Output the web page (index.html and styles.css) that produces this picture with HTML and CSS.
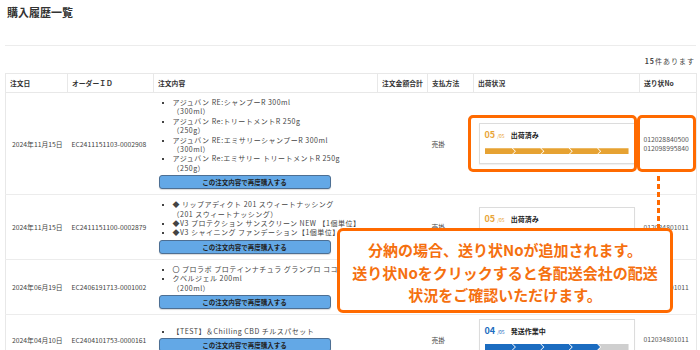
FILE: index.html
```html
<!DOCTYPE html>
<html lang="ja">
<head>
    <meta charset="UTF-8">
    <meta name="viewport" content="width=device-width, initial-scale=1.0">
    <title>購入履歴一覧</title>
    <link rel="stylesheet" href="styles.css">
</head>
<body>
    <div class="page">
        <h1 class="title">購入履歴一覧</h1>
        <hr class="rule">
        <p class="count"><b>15</b>件あります</p>

        <table class="orders">
            <colgroup>
                <col class="c-date">
                <col class="c-id">
                <col class="c-items">
                <col class="c-total">
                <col class="c-pay">
                <col class="c-status">
                <col class="c-track">
            </colgroup>
            <thead>
                <tr>
                    <th>注文日</th>
                    <th>オーダーＩＤ</th>
                    <th>注文内容</th>
                    <th>注文金額合計</th>
                    <th>支払方法</th>
                    <th>出荷状況</th>
                    <th>送り状No</th>
                </tr>
            </thead>
            <tbody>
                <tr>
                    <td class="date">2024年11月15日</td>
                    <td>EC2411151103-0002908</td>
                    <td class="items">
                        <ul>
                            <li>アジュバン RE:シャンプーR 300ml<span class="sub">（300ml）</span></li>
                            <li>アジュバン Re:トリートメントR 250g<span class="sub">（250g）</span></li>
                            <li>アジュバン RE:エミサリーシャンプーR 300ml<span class="sub">（300ml）</span></li>
                            <li>アジュバン Re:エミサリー トリートメントR 250g<span class="sub">（250g）</span></li>
                        </ul>
                        <button class="rebuy">この注文内容で再度購入する</button>
                    </td>
                    <td></td>
                    <td>売掛</td>
                    <td class="status">
                        <div class="status-box">
                            <div class="status-head"><span class="num">05</span><span class="of">/05</span><span class="label">出荷済み</span></div>
                            <div class="steps">
                                <span class="step"></span><span class="step"></span><span class="step"></span><span class="step"></span><span class="step"></span>
                            </div>
                        </div>
                    </td>
                    <td class="track"><a>012028840500</a><a>012098995840</a></td>
                </tr>
                <tr>
                    <td class="date">2024年11月15日</td>
                    <td>EC2411151100-0002879</td>
                    <td class="items">
                        <ul>
                            <li>◆ リップアディクト 201 スウィートナッシング<span class="sub">（201 スウィートナッシング）</span></li>
                            <li>◆V3 プロテクション サンスクリーン NEW 【1個単位】</li>
                            <li>◆V3 シャイニング ファンデーション【1個単位】</li>
                        </ul>
                        <button class="rebuy">この注文内容で再度購入する</button>
                    </td>
                    <td></td>
                    <td>売掛</td>
                    <td class="status">
                        <div class="status-box">
                            <div class="status-head"><span class="num">05</span><span class="of">/05</span><span class="label">出荷済み</span></div>
                            <div class="steps">
                                <span class="step"></span><span class="step"></span><span class="step"></span><span class="step"></span><span class="step"></span>
                            </div>
                        </div>
                    </td>
                    <td class="track"><a>012034801011</a></td>
                </tr>
                <tr>
                    <td class="date">2024年06月19日</td>
                    <td>EC2406191713-0001002</td>
                    <td class="items">
                        <ul>
                            <li class="nowrap">〇 プロラボ プロテインナチュラ グランプロ ココア 200g</li>
                            <li>クベルジェル 200ml<span class="sub">（200ml）</span></li>
                        </ul>
                        <button class="rebuy">この注文内容で再度購入する</button>
                    </td>
                    <td></td>
                    <td>売掛</td>
                    <td class="status">
                        <div class="status-box">
                            <div class="status-head"><span class="num">05</span><span class="of">/05</span><span class="label">出荷済み</span></div>
                            <div class="steps">
                                <span class="step"></span><span class="step"></span><span class="step"></span><span class="step"></span><span class="step"></span>
                            </div>
                        </div>
                    </td>
                    <td class="track"><a>012034801011</a></td>
                </tr>
                <tr>
                    <td class="date">2024年04月10日</td>
                    <td>EC2404101753-0000161</td>
                    <td class="items">
                        <ul>
                            <li>【TEST】＆Chilling CBD チルスパセット</li>
                        </ul>
                        <button class="rebuy">この注文内容で再度購入する</button>
                    </td>
                    <td></td>
                    <td>売掛</td>
                    <td class="status">
                        <div class="status-box working">
                            <div class="status-head"><span class="num">04</span><span class="of">/05</span><span class="label">発送作業中</span></div>
                            <div class="steps">
                                <span class="step"></span><span class="step"></span><span class="step"></span><span class="step"></span><span class="step todo"></span>
                            </div>
                        </div>
                    </td>
                    <td class="track"><a>012034801011</a></td>
                </tr>
            </tbody>
        </table>

        <!-- annotation overlay -->
        <div class="mark mark-status"></div>
        <div class="mark mark-track"></div>
        <div class="connector"></div>
        <div class="callout">
            分納の場合、送り状Noが追加されます。<br>
            送り状Noをクリックすると各配送会社の配送<br>
            状況をご確認いただけます。
        </div>
    </div>
</body>
</html>
```

FILE: styles.css
```css
html, body {
    margin: 0;
    overflow: hidden;
    background: #fff;
}

body {
    font-family: "Noto Sans CJK JP", "Noto Sans", sans-serif;
    color: #333;
}

.page {
    position: relative;
    padding: 0 4px 0 5px;
}

.title {
    margin: 0;
    padding: 4px 0 0 2px;
    font-size: 11px;
    line-height: 16px;
    font-weight: bold;
    color: #333;
}

.rule {
    margin: 25px 0 0;
    border: 0;
    border-top: 1px solid #ececec;
}

.count {
    margin: 10px 1px 7px 0;
    font-size: 7px;
    line-height: 10px;
    letter-spacing: 1px;
    text-align: right;
    color: #444;
}

.orders {
    width: 691px;
    table-layout: fixed;
    border-collapse: collapse;
    border: 1px solid #e8e8e8;
    font-size: 6.8px;
    color: #444;
}

.c-date { width: 62px; }
.c-id { width: 86px; }
.c-items { width: 224px; }
.c-total { width: 50px; }
.c-pay { width: 46px; }
.c-status { width: 166px; }
.c-track { width: 57px; }

.orders th {
    height: 18px;
    padding: 0 4px;
    text-align: left;
    white-space: nowrap;
    overflow: hidden;
    font-weight: bold;
    color: #333;
    border-right: 1px solid #e8e8e8;
    border-bottom: 1px solid #e8e8e8;
}

.orders td {
    padding: 5px 4px;
    vertical-align: middle;
    border-bottom: 1px solid #ececec;
    white-space: nowrap;
}

.orders td.date {
    padding-left: 6px;
}

.orders td.items {
    padding: 5px;
    white-space: normal;
}

.items ul {
    margin: 0;
    padding-left: 14px;
    list-style: square;
    font-size: 7px;
    line-height: 9.4px;
    letter-spacing: 0.5px;
}

.items li::marker {
    font-size: 6px;
}

.items .sub {
    display: block;
}

.items .nowrap {
    white-space: nowrap;
}

.rebuy {
    display: block;
    width: 172px;
    height: 14px;
    margin-top: 2px;
    padding: 0;
    font-family: inherit;
    font-size: 6.5px;
    font-weight: bold;
    color: #222;
    background: #63a8e6;
    border: 1px solid #4d6f93;
    border-radius: 3px;
    box-shadow: 0 1px 1px rgba(0, 0, 0, 0.15);
}

.orders td.status {
    padding: 4px 5px;
}

.status-box {
    padding: 5px 5px 9px;
    border: 1px solid #dcdcdc;
    box-shadow: 0 1px 1px rgba(0, 0, 0, 0.06);
    background: #fff;
}

.status-head {
    height: 12px;
    margin-bottom: 7px;
    display: flex;
    align-items: baseline;
    line-height: 12px;
}

.status-head .num {
    font-size: 9px;
    font-weight: bold;
    color: #e9a63a;
}

.status-head .of {
    margin-left: 2px;
    font-size: 5px;
    color: #e9a63a;
}

.status-head .label {
    margin-left: 6px;
    font-size: 7px;
    font-weight: bold;
    color: #222;
}

.working .num,
.working .of {
    color: #1b6cc0;
}

.steps {
    display: flex;
    height: 6px;
}

.step {
    flex: 1;
    margin-left: -2px;
    background: #e6a232;
    clip-path: polygon(0 0, calc(100% - 3px) 0, 100% 50%, calc(100% - 3px) 100%, 0 100%, 3px 50%);
}

.step:first-child {
    margin-left: 0;
    clip-path: polygon(0 0, calc(100% - 3px) 0, 100% 50%, calc(100% - 3px) 100%, 0 100%);
}

.step:last-child {
    clip-path: polygon(0 0, 100% 0, 100% 100%, 0 100%, 3px 50%);
}

.working .step {
    background: #1b6cc0;
}

.working .step.todo {
    background: #cfcfcf;
}

.track a {
    display: block;
    font-size: 6.8px;
    line-height: 8.5px;
    color: #555;
}

/* annotation overlay */
.mark {
    position: absolute;
    top: 115px;
    height: 57px;
    box-sizing: border-box;
    border: 3px solid #ff6a00;
    border-radius: 5px;
}

.mark-status {
    left: 468px;
    width: 169px;
}

.mark-track {
    left: 637px;
    width: 59px;
}

.connector {
    position: absolute;
    left: 657px;
    top: 176px;
    width: 3px;
    height: 52px;
    background: repeating-linear-gradient(to bottom, #ff6a00 0 5px, transparent 5px 8px);
}

.callout {
    position: absolute;
    left: 337px;
    top: 228px;
    width: 336px;
    height: 85px;
    box-sizing: border-box;
    padding-top: 8px;
    border: 3px solid #ff6a00;
    border-radius: 6px;
    background: #fff;
    text-align: center;
    font-size: 15px;
    line-height: 22.5px;
    font-weight: bold;
    color: #f5700f;
}
```
